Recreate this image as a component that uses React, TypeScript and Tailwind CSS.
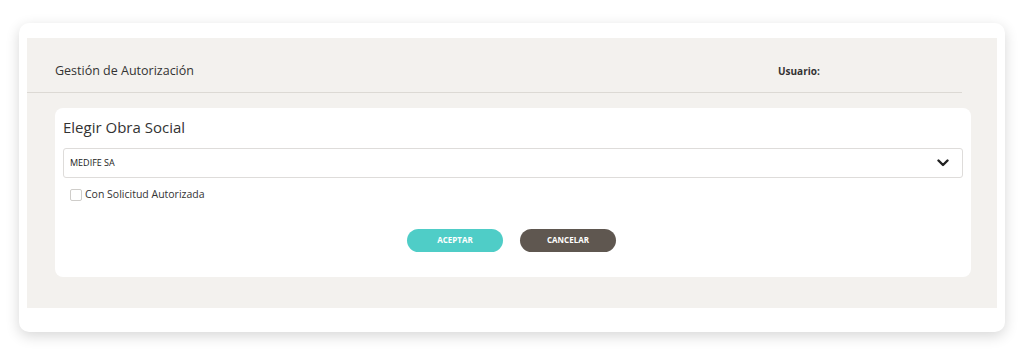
import React from "react";

const font = { fontFamily: '"Open Sans", "Noto Sans", Arial, sans-serif' };

const Chevron = () => (
  <svg width="12" height="8" viewBox="0 0 12 8" fill="none">
    <path
      d="M1.5 1.5L6 6L10.5 1.5"
      stroke="#222"
      strokeWidth="2.4"
      strokeLinecap="round"
      strokeLinejoin="round"
    />
  </svg>
);

const App = () => {
  return (
    <div className="min-h-[355px] w-[1024px] bg-white pl-[19px] pt-[23px]" style={font}>
      <div className="w-[986px] rounded-[10px] bg-white px-[8px] pb-[24px] pt-[15px] shadow-[0_4px_14px_rgba(0,0,0,0.16)]">
        <div className="h-[270px] bg-[#f3f1ee]">
          {/* header */}
          <div className="flex h-[55px] w-[935px] items-center justify-between border-b border-[#dcd9d4] pl-[28px] pt-[13px]">
            <span className="text-[12.5px] text-[#333]">Gestión de Autorización</span>
            <span className="w-[184px] text-[10px] font-bold text-[#333]">Usuario:</span>
          </div>

          {/* card */}
          <div className="ml-[28px] mt-[15px] h-[169px] w-[916px] rounded-[8px] bg-white px-[8px] pt-[8px]">
            <h2 className="text-[15px] leading-[22px] text-[#333]">Elegir Obra Social</h2>
            <div className="mt-[10px] flex h-[30px] w-[900px] items-center justify-between rounded-[3px] border border-[#dedcda] pl-[6px] pr-[13px]">
              <span className="text-[9px] font-medium text-[#222]">MEDIFE SA</span>
              <Chevron />
            </div>
            <label className="mt-[9px] flex items-center gap-[3px] pl-[7px]">
              <span className="h-[12px] w-[12px] rounded-[2px] border border-[#cfcdca] bg-white" />
              <span className="text-[10.5px] text-[#333]">Con Solicitud Autorizada</span>
            </label>
            <div className="mt-[26px] flex justify-center gap-[17px] pr-[3px]">
              <button className="h-[23px] w-[96px] rounded-full bg-[#4fcdc7] text-[8px] font-bold text-white">
                ACEPTAR
              </button>
              <button className="h-[23px] w-[96px] rounded-full bg-[#5f5750] text-[8px] font-bold text-white">
                CANCELAR
              </button>
            </div>
          </div>
        </div>
      </div>
    </div>
  );
};

export default App;
